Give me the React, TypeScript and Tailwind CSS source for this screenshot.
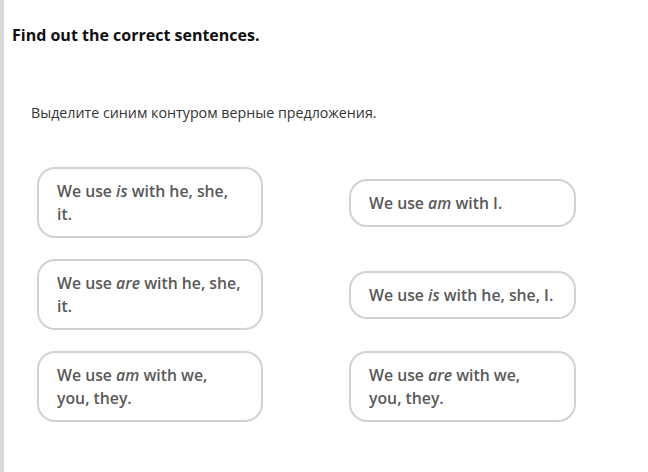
import { Fragment } from "react"

// [before, italic word, after]; "\n" forces the line break seen in the original
const cards: [string, string, string][] = [
  ["We use ", "is", " with he, she, it."],
  ["We use ", "am", " with I."],
  ["We use ", "are", " with he, she, it."],
  ["We use ", "is", " with he, she, I."],
  ["We use ", "am", " with we,\nyou, they."],
  ["We use ", "are", " with we,\nyou, they."],
]

function Card({ parts }: { parts: [string, string, string] }) {
  const tail = parts[2].split("\n")
  return (
    <div className="border-2 border-[#d2d2d2] rounded-[18px] pl-[18px] pr-[16px] pt-[11px] pb-[10px] bg-white text-[15.8px] leading-[23px] font-semibold text-[#595959]">
      {parts[0]}
      <i className="italic">{parts[1]}</i>
      {tail.map((t, i) => (
        <Fragment key={i}>
          {i > 0 && <br />}
          {t}
        </Fragment>
      ))}
    </div>
  )
}

export default function App() {
  return (
    <div
      className="w-[648px] h-[472px] bg-white flex overflow-hidden"
      style={{ fontFamily: '"Open Sans", sans-serif' }}
    >
      <div className="w-[4px] flex-none bg-[#d9d9d9]" />
      <div className="flex-1 flex flex-col">
        <h1 className="pl-[8px] pt-[23px] text-[16px] leading-[24px] font-bold text-[#111]">
          Find out the correct sentences.
        </h1>
        <p className="pl-[27px] mt-[56px] text-[14.25px] leading-[20px] text-[#333]">
          Выделите синим контуром верные предложения.
        </p>
        <div className="grid grid-cols-[226px_227px] gap-x-[86px] gap-y-[21px] items-center pl-[33px] mt-[44px]">
          {cards.map((c, i) => (
            <Card key={i} parts={c} />
          ))}
        </div>
      </div>
    </div>
  )
}
